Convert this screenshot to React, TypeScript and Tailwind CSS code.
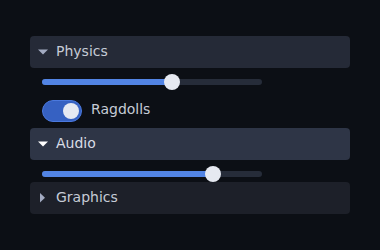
import { useState } from 'react'

function Caret({ open, color }: { open: boolean; color: string }) {
  return open ? (
    <svg width="10" height="6" viewBox="0 0 10 6" className="shrink-0">
      <path d="M0 0.5 L10 0.5 L5 5.5 Z" fill={color} />
    </svg>
  ) : (
    <svg width="10" height="10" viewBox="0 0 10 10" className="shrink-0">
      <path d="M2 0 L7 4.75 L2 9.5 Z" fill={color} />
    </svg>
  )
}

function Header({ label, open, hover }: { label: string; open: boolean; hover?: boolean }) {
  const bg = hover ? 'bg-[#2e3546]' : open ? 'bg-[#252a37]' : 'bg-[#1d2029]'
  return (
    <div className={`h-8 flex items-center gap-[8px] pl-[8px] rounded-[4px] ${bg}`}>
      <Caret open={open} color={hover ? '#ffffff' : '#a3abc2'} />
      <span className={`text-[14px] leading-5 pb-[2px] ${hover ? 'text-[#d9dde6]' : 'text-[#c6cbd6]'}`}>{label}</span>
    </div>
  )
}

function Slider({ value }: { value: number }) {
  return (
    <div className="h-4 ml-[12px] w-[220px] relative flex items-center">
      <div className="w-full h-[6px] rounded-full bg-[#262c39]">
        <div className="h-full rounded-full bg-[#5284e4]" style={{ width: value }} />
      </div>
      <div
        className="absolute top-0 w-4 h-4 rounded-full bg-[#e6e9f1]"
        style={{ left: value - 8 }}
      />
    </div>
  )
}

export default function App() {
  const [on, setOn] = useState(true)
  return (
    <div
      className="w-[380px] h-[250px] bg-[#0c0f15] px-[30px] pt-[36px] flex flex-col"
      style={{ fontFamily: '"DejaVu Sans", sans-serif' }}
    >
      <Header label="Physics" open />
      <div className="mt-[6px]">
        <Slider value={130} />
      </div>
      <div className="mt-[10px] ml-[12px] h-[22px] flex items-center gap-[9px]">
        <button
          onClick={() => setOn(v => !v)}
          className="w-10 h-[22px] rounded-full bg-[#3661c2] border border-[#4b79de] flex items-center justify-end pr-[2px]"
        >
          <span className="w-4 h-4 rounded-full bg-[#e6e9f2]" />
        </button>
        <span className="text-[14px] leading-5 pb-[5px] text-[#c6cbd6]">Ragdolls</span>
      </div>
      <div className="mt-[6px]">
        <Header label="Audio" open hover />
      </div>
      <div className="mt-[6px]">
        <Slider value={171} />
      </div>
      <Header label="Graphics" open={false} />
    </div>
  )
}
